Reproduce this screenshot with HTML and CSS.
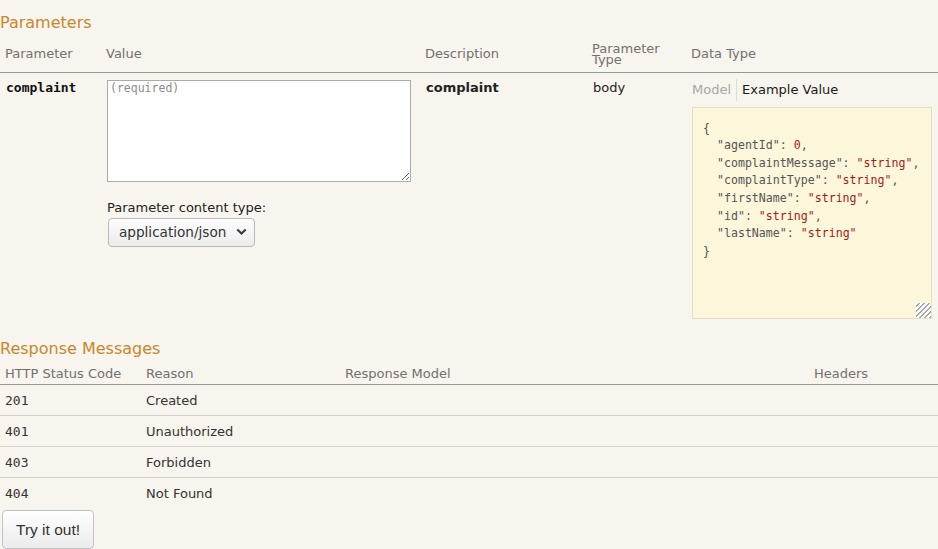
FILE: index.html
```html
<!DOCTYPE html>
<html lang="en">
<head>
<meta charset="utf-8">
<title>Parameters</title>
<link rel="stylesheet" href="styles.css">
</head>
<body>
  <h4 class="section-title first">Parameters</h4>
  <table class="params">
    <colgroup>
      <col class="c-param"><col class="c-value"><col class="c-desc"><col class="c-ptype"><col>
    </colgroup>
    <thead>
      <tr>
        <th>Parameter</th>
        <th>Value</th>
        <th>Description</th>
        <th>Parameter Type</th>
        <th>Data Type</th>
      </tr>
    </thead>
    <tbody>
      <tr>
        <td class="code-name">complaint</td>
        <td>
          <textarea class="body-textarea" placeholder="(required)"></textarea>
          <div class="ctype">
            <label class="ctype-label">Parameter content type:</label>
            <div class="select">
              <span>application/json</span>
              <svg class="chev" width="11" height="8" viewBox="0 0 11 8"><path d="M1.3 1.5 L5.5 5.6 L9.7 1.5" fill="none" stroke="#3a3a3a" stroke-width="2.1"/></svg>
            </div>
          </div>
        </td>
        <td class="desc">complaint</td>
        <td class="ptype">body</td>
        <td class="dtype">
          <div class="tabs">
            <span class="tab tab-off">Model</span>
            <span class="tab tab-on">Example Value</span>
          </div>
          <div class="example">
<pre><span class="p">{</span>
  <span class="k">"agentId"</span><span class="p">:</span> <span class="n">0</span><span class="p">,</span>
  <span class="k">"complaintMessage"</span><span class="p">:</span> <span class="s">"string"</span><span class="p">,</span>
  <span class="k">"complaintType"</span><span class="p">:</span> <span class="s">"string"</span><span class="p">,</span>
  <span class="k">"firstName"</span><span class="p">:</span> <span class="s">"string"</span><span class="p">,</span>
  <span class="k">"id"</span><span class="p">:</span> <span class="s">"string"</span><span class="p">,</span>
  <span class="k">"lastName"</span><span class="p">:</span> <span class="s">"string"</span>
<span class="p">}</span></pre>
            <span class="grip"></span>
          </div>
        </td>
      </tr>
    </tbody>
  </table>

  <h4 class="section-title second">Response Messages</h4>
  <table class="responses">
    <colgroup>
      <col class="r-code"><col class="r-reason"><col class="r-model"><col>
    </colgroup>
    <thead>
      <tr>
        <th>HTTP Status Code</th>
        <th>Reason</th>
        <th>Response Model</th>
        <th>Headers</th>
      </tr>
    </thead>
    <tbody>
      <tr><td class="status">201</td><td>Created</td><td></td><td></td></tr>
      <tr><td class="status">401</td><td>Unauthorized</td><td></td><td></td></tr>
      <tr><td class="status">403</td><td>Forbidden</td><td></td><td></td></tr>
      <tr class="last"><td class="status">404</td><td>Not Found</td><td></td><td></td></tr>
    </tbody>
  </table>
  <button class="try-btn" type="button">Try it out!</button>
</body>
</html>
```

FILE: styles.css
```css
html, body {
  margin: 0;
  padding: 0;
  background: #f8f4ee;
  font-family: "DejaVu Sans", sans-serif;
  font-size: 13px;
  color: #333;
}

.section-title {
  margin: 0;
  font-weight: normal;
  font-size: 16px;
  line-height: 18.6px;
  color: #c6882e;
}
.section-title.first { margin-top: 14px; }
.section-title.second { margin-top: 15px; }

table {
  width: 100%;
  border-collapse: collapse;
  table-layout: fixed;
}

th {
  text-align: left;
  font-weight: normal;
  color: #717171;
  border-bottom: 1px solid #999;
}

/* Parameters table */
.c-param { width: 101px; }
.c-value { width: 319px; }
.c-desc { width: 167px; }
.c-ptype { width: 99px; }

.params th {
  padding: 10px 5px 7px;
  line-height: 11px;
  vertical-align: middle;
}
.params td {
  padding: 7px 5px 6px 6px;
  vertical-align: top;
  line-height: 15px;
}
.code-name {
  font-family: "DejaVu Sans Mono", monospace;
  font-weight: bold;
  color: #111;
}
.desc {
  font-weight: bold;
  color: #222;
}
.ptype { color: #222; }

.body-textarea {
  display: block;
  box-sizing: border-box;
  width: 304px;
  height: 102px;
  margin: 0;
  padding: 1px 2px;
  border: 1px solid #aaa;
  background: #fff;
  font-family: "DejaVu Sans Mono", monospace;
  font-size: 11.5px;
  line-height: 13px;
  color: #333;
}
.body-textarea::placeholder { color: #8c8c8c; }

.ctype {
  margin-top: 18px;
  display: flex;
  flex-direction: column;
  align-items: flex-start;
}
.ctype-label {
  line-height: 15px;
  color: #222;
}
.select {
  margin-top: 3px;
  margin-left: 1px;
  box-sizing: border-box;
  width: 147px;
  height: 29px;
  display: flex;
  align-items: center;
  justify-content: space-between;
  padding: 0 7px 0 10px;
  border: 1px solid #b9b9b9;
  border-radius: 4px;
  background: linear-gradient(#fdfdfd, #ececec);
  font-size: 13.6px;
  color: #333;
}
.chev { display: block; }

.dtype { padding-left: 6px; }
.tabs {
  display: flex;
  margin-top: -1px;
  line-height: 22px;
}
.tab-off {
  color: #a8a8a8;
  padding-right: 5px;
}
.tab-on {
  color: #1a1a1a;
  border-left: 1px solid #ddd;
  padding-left: 5px;
}
.example {
  position: relative;
  box-sizing: border-box;
  width: 240px;
  height: 212px;
  margin-top: 6px;
  background: #fcf6db;
  border: 1px solid #e6dfc3;
}
.example pre {
  margin: 0;
  padding: 12px 10px 10px;
  font-family: "DejaVu Sans Mono", monospace;
  font-size: 11.6px;
  line-height: 17.6px;
  color: #555;
}
.example .k { color: #555; }
.example .p { color: #555; }
.example .s { color: #a11c1c; }
.example .n { color: #a11c1c; }
.grip {
  position: absolute;
  right: 0;
  bottom: 0;
  width: 15px;
  height: 15px;
  background: #fff repeating-linear-gradient(135deg, transparent 0 2px, #a9a9a9 2px 3.5px);
}

/* Responses table */
.r-code { width: 141px; }
.r-reason { width: 199px; }
.r-model { width: 469px; }

.responses th {
  padding: 8px 5px 3px;
  line-height: 15px;
}
.responses td {
  padding: 8px 5px 7px;
  line-height: 15px;
  border-bottom: 1px solid #d2d0cc;
  color: #333;
}
.responses tr.last td { border-bottom: none; }
.status {
  font-family: "DejaVu Sans Mono", monospace;
  color: #111;
}

.try-btn {
  display: block;
  margin: 2px 0 0 2px;
  padding: 10px 13px;
  border: 1px solid #c2c2c2;
  border-radius: 4px;
  background: linear-gradient(#ffffff, #ebebeb);
  font-family: "Liberation Sans", sans-serif;
  font-size: 15.5px;
  line-height: 17px;
  color: #333;
}
```
